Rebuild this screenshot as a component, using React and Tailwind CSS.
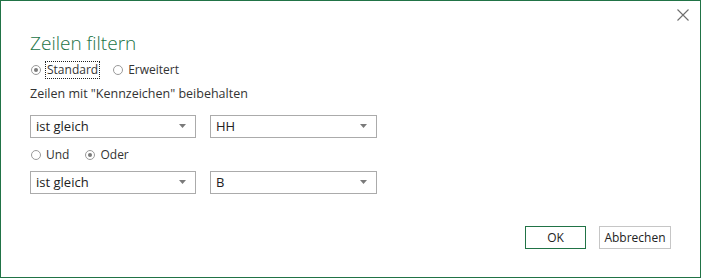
import React from "react";

function Radio({ checked, label, focused }) {
  return (
    <label className="flex items-center gap-[5px]">
      <span className="w-[10px] h-[10px] rounded-full border border-[#9a9a9a] bg-white flex items-center justify-center">
        {checked && <span className="w-[4px] h-[4px] rounded-full bg-[#7a7a7a]" />}
      </span>
      <span
        className={
          focused
            ? "outline outline-1 outline-dotted outline-[#222] px-[1px] leading-[16px]"
            : "leading-[16px]"
        }
      >
        {label}
      </span>
    </label>
  );
}

function Select({ value, width }) {
  return (
    <div
      className={`${width} h-[23px] border border-[#ababab] bg-white flex items-center justify-between pl-[5px] pr-[9px]`}
    >
      <span className="text-[#222]">{value}</span>
      <svg width="7" height="4" viewBox="0 0 7 4">
        <path d="M0 0 H7 L3.5 4 Z" fill="#7a7a7a" />
      </svg>
    </div>
  );
}

export default function App() {
  return (
    <div
      className="relative w-[701px] h-[278px] bg-white border border-[#217346] text-[13px] text-[#333]"
      style={{ fontFamily: '"Open Sans", "Noto Sans", sans-serif' }}
    >
      {/* close button */}
      <button className="absolute right-[11px] top-[8px] w-[12px] h-[12px]">
        <svg width="12" height="12" viewBox="0 0 12 12">
          <path d="M0.5 0.5 L11.5 11.5 M11.5 0.5 L0.5 11.5" stroke="#6e6e6e" strokeWidth="1.1" />
        </svg>
      </button>

      <div className="pl-[29px] pt-[29px]">
        <h1 className="text-[19px] font-light text-[#217346] leading-[26px]">
          Zeilen filtern
        </h1>

        <div className="flex items-center gap-[14px] mt-[6px] ml-[1px] text-[12px]">
          <Radio checked label="Standard" focused />
          <Radio label="Erweitert" />
        </div>

        <div className="mt-[7px] text-[12.5px]">
          Zeilen mit "Kennzeichen" beibehalten
        </div>

        <div className="flex gap-[14px] mt-[11px]">
          <Select value="ist gleich" width="w-[166px]" />
          <Select value="HH" width="w-[167px]" />
        </div>

        <div className="flex items-center gap-[16px] mt-[9px] ml-[1px] text-[12px]">
          <Radio label="Und" />
          <Radio checked label="Oder" />
        </div>

        <div className="flex gap-[14px] mt-[8px]">
          <Select value="ist gleich" width="w-[166px]" />
          <Select value="B" width="w-[167px]" />
        </div>
      </div>

      <div className="absolute right-[29px] bottom-[28px] flex gap-[13px] text-[12px]">
        <button className="w-[61px] h-[23px] border border-[#217346] bg-white text-[#222]">
          OK
        </button>
        <button className="w-[72px] h-[23px] border border-[#c6c6c6] bg-white text-[#222]">
          Abbrechen
        </button>
      </div>
    </div>
  );
}
